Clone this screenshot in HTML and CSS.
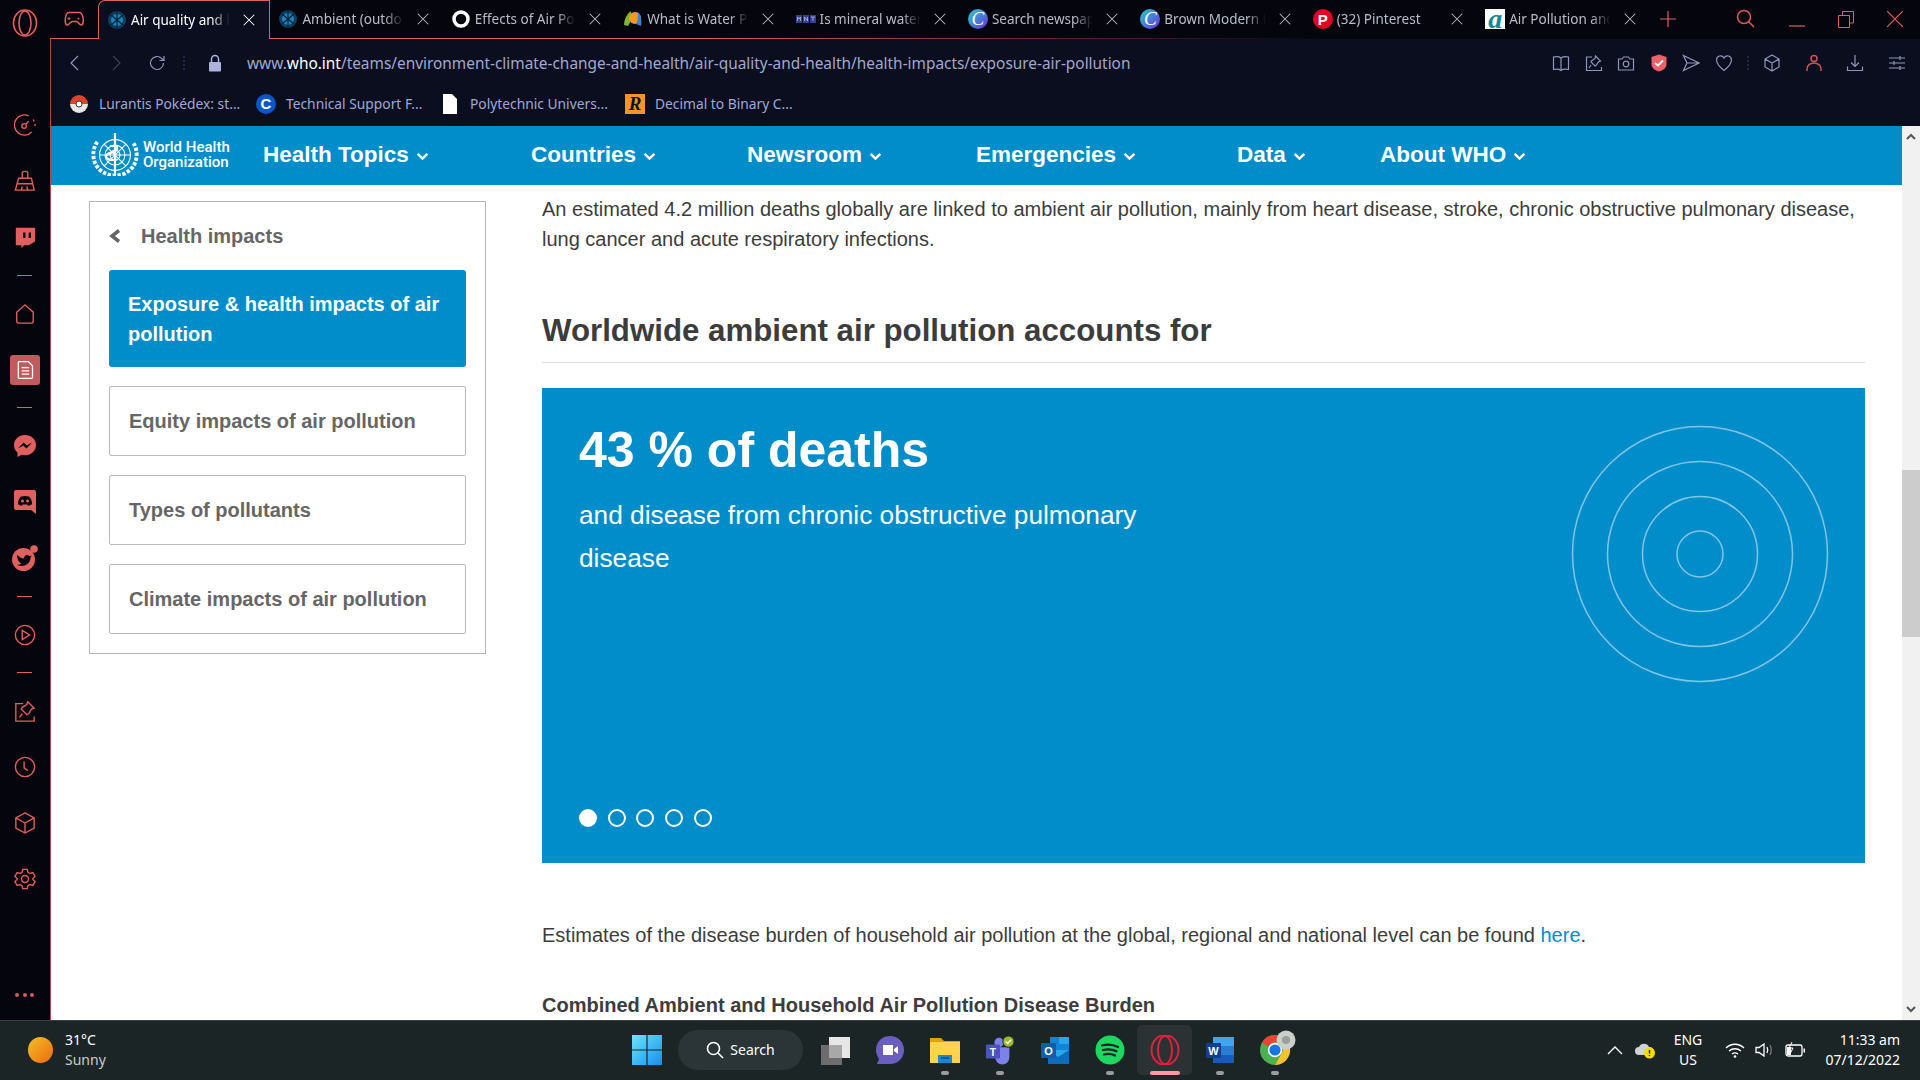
FILE: index.html
```html
<!DOCTYPE html>
<html lang="en">
<head>
    <meta charset="UTF-8">
    <meta name="viewport" content="width=device-width, initial-scale=1.0">
    <title>Air quality and health</title>
    <link rel="stylesheet" href="styles.css">
</head>
<body>
    <svg class="defs" width="0" height="0">
        <symbol id="x" viewBox="0 0 16 16"><path d="M2 2l12 12M14 2L2 14" fill="none" stroke="currentColor" stroke-width="1.2"/></symbol>
        <symbol id="who-fav" viewBox="0 0 20 20"><circle cx="10" cy="10" r="9" fill="#0d3f63"/><circle cx="10" cy="10" r="6" fill="#1a84bd"/><path d="M10 1v18M4 5l12 10M16 5L4 15" stroke="#0b1a2e" stroke-width="1.1"/></symbol>
        <symbol id="canva" viewBox="0 0 20 20"><defs><linearGradient id="cg" x1="0" y1="0" x2="1" y2="1"><stop offset="0" stop-color="#1fd0cf"/><stop offset="1" stop-color="#6d2ee0"/></linearGradient></defs><circle cx="10" cy="10" r="10" fill="url(#cg)"/></symbol>
        <symbol id="chev" viewBox="0 0 12 8"><path d="M1.5 1.5L6 6l4.5-4.5" fill="none" stroke="currentColor" stroke-width="2.2"/></symbol>
    </svg>

    <!-- tab strip -->
    <header class="tabbar">
        <div class="tabbar-logo">
            <svg width="26" height="30" viewBox="0 0 26 30"><ellipse cx="13" cy="15" rx="11.5" ry="13" fill="none" stroke="#e0605f" stroke-width="1.6"/><ellipse cx="13" cy="15" rx="6" ry="12" fill="none" stroke="#e0605f" stroke-width="1.6"/></svg>
        </div>
        <div class="tabrow">
            <div class="tab-game">
                <svg width="20" height="16" viewBox="0 0 20 16"><path d="M5 1.500h10c2.500 0 3.500 2 4 5 .5 3.500.3 7-1.500 7.500-2 .5-3-3-5-3.500H8c-2 .5-3 4-5 3.500C1.200 13.500 1 10 1.500 6.500c.5-3 1.500-5 3.500-5z" fill="none" stroke="#e0605f" stroke-width="1.500"/><path d="M5 6v3M3.500 7.500h3" stroke="#e0605f"/><circle cx="14.500" cy="7.500" r="1" fill="#e0605f"/></svg>
            </div>
            <div class="tab tab-active">
                <svg class="fav"><use href="#who-fav"/></svg>
                <span class="tab-title">Air quality and health</span>
                <svg class="tab-x"><use href="#x"/></svg>
            </div>
            <div class="tab">
                <svg class="fav"><use href="#who-fav"/></svg>
                <span class="tab-title">Ambient (outdoor)</span>
                <svg class="tab-x"><use href="#x"/></svg>
            </div>
            <div class="tab">
                <svg class="fav" viewBox="0 0 20 20"><circle cx="10" cy="10" r="7" fill="none" stroke="#fff" stroke-width="3.500"/></svg>
                <span class="tab-title">Effects of Air Pollution</span>
                <svg class="tab-x"><use href="#x"/></svg>
            </div>
            <div class="tab">
                <svg class="fav" viewBox="0 0 20 20"><path d="M1 16C1 9 5 4 8 2c1 6 0 11-3 15z" fill="#7ab43a"/><circle cx="12" cy="9" r="6" fill="#f29a1f"/><path d="M15 3c3 3 4 9 3 14l-5-2c2-3 2-8 2-12z" fill="#3d7fd1"/></svg>
                <span class="tab-title">What is Water Pollution</span>
                <svg class="tab-x"><use href="#x"/></svg>
            </div>
            <div class="tab">
                <svg class="fav" viewBox="0 0 20 20"><path d="M0 6h6v8H0zM7 6h6v8H7zM14 6h6v8h-6z" fill="#34418f"/><path d="M1.500 12V8l1.500 2 1.500-2v4M8.500 12V8l3 4V8M15 8h4M17 8v4" fill="none" stroke="#b4bce0" stroke-width=".8"/></svg>
                <span class="tab-title">Is mineral water good</span>
                <svg class="tab-x"><use href="#x"/></svg>
            </div>
            <div class="tab">
                <span class="fav fav-letter"><svg class="fav-bg"><use href="#canva"/></svg><i>C</i></span>
                <span class="tab-title">Search newspapers</span>
                <svg class="tab-x"><use href="#x"/></svg>
            </div>
            <div class="tab">
                <span class="fav fav-letter"><svg class="fav-bg"><use href="#canva"/></svg><i>C</i></span>
                <span class="tab-title">Brown Modern Flyer</span>
                <svg class="tab-x"><use href="#x"/></svg>
            </div>
            <div class="tab">
                <span class="fav fav-pin">P</span>
                <span class="tab-title">(32) Pinterest</span>
                <svg class="tab-x"><use href="#x"/></svg>
            </div>
            <div class="tab">
                <span class="fav fav-a">a</span>
                <span class="tab-title">Air Pollution and Health</span>
                <svg class="tab-x"><use href="#x"/></svg>
            </div>
            <svg class="tab-plus" width="16" height="16" viewBox="0 0 16 16"><path d="M8 0v16M0 8h16" stroke="#e0605f" stroke-width="1.200"/></svg>
            <div class="winctl">
                <svg width="20" height="20" viewBox="0 0 20 20"><circle cx="8" cy="8" r="6.500" fill="none" stroke="#d9595a" stroke-width="1.500"/><path d="M12.500 12.500L18 18" stroke="#d9595a" stroke-width="1.500"/></svg>
                <svg width="16" height="16" viewBox="0 0 16 16"><path d="M0 15h16" stroke="#e0605f" stroke-width="1.200"/></svg>
                <svg width="16" height="18" viewBox="0 0 16 18"><path d="M.5 5.500h11v12H.5zM4.500 5V1.500h11V13H12" fill="none" stroke="#e0605f"/></svg>
                <svg width="16" height="16" viewBox="0 0 16 16"><path d="M0 0l16 16M16 0L0 16" stroke="#e0605f" stroke-width="1.200"/></svg>
            </div>
        </div>
    </header>

    <div class="window">
        <!-- opera sidebar -->
        <nav class="rail">
            <div class="rail-ico"><svg viewBox="0 0 24 24"><path d="M19.500 19.500A11 11 0 1 1 16 2" /><path d="M21 6l1 2M23 11v2"/><circle cx="11" cy="13" r="2.500"/><path d="M13 11l3-3"/></svg></div>
            <div class="rail-ico"><svg viewBox="0 0 24 24"><path d="M9 9V3c0-2 6-2 6 0v6M5 9h14l3 13H1.500zM3 15h18M8 22l1-4M15 22l-1-4"/></svg></div>
            <div class="rail-ico"><svg viewBox="0 0 24 24"><path class="fill" fill-rule="evenodd" d="M2 2h21v15l-7 4h-5l-3 3v-3H2zM10 7v6h2.500V7zM16 7v6h2.500V7z"/></svg></div>
            <div class="rail-sep"></div>
            <div class="rail-ico"><svg viewBox="0 0 24 24"><path d="M3 10l9-8 9 8v10a2 2 0 0 1-2 2H5a2 2 0 0 1-2-2z"/></svg></div>
            <div class="rail-ico rail-on"><svg viewBox="0 0 24 24"><path d="M4 3a1 1 0 0 1 1-1h11l5 5v14a1 1 0 0 1-1 1H5a1 1 0 0 1-1-1zM8 9h9M8 13h9M8 17h9"/></svg></div>
            <div class="rail-sep"></div>
            <div class="rail-ico rail-big"><svg viewBox="0 0 24 24"><path class="fill" d="M12 1C5.500 1 1 5.500 1 11c0 3 1.200 5.700 3.500 7.500V23l4-2.200c1 .3 2.300.4 3.500.4 6.500 0 11-4.700 11-10.200S18.500 1 12 1z"/><path class="cut" d="M5 14.500l5.500-6 3.300 3 5.200-3-5.500 6-3.300-3z"/></svg></div>
            <div class="rail-ico rail-big"><svg viewBox="0 0 24 24"><path class="fill" d="M3 0h18a2 2 0 0 1 2 2v22l-5-4H3a2 2 0 0 1-2-2V2a2 2 0 0 1 2-2z"/><path class="cut" d="M5 14c0-3 1-6 3-7.500 2.500-.8 5.500-.8 8 0 2 1.500 3 4.500 3 7.500-1 1-2.500 1.700-4 1.800l-.8-1.300H9.800L9 15.800C7.500 15.700 6 15 5 14z"/><circle class="fill" cx="9.500" cy="11" r="1.500"/><circle class="fill" cx="14.500" cy="11" r="1.500"/></svg></div>
            <div class="rail-ico rail-tw"><svg viewBox="0 0 26 26"><circle class="fill" cx="11.500" cy="14.500" r="11.500"/><path class="cut" d="M5 10c2 2 4.500 3.300 7 3.500 0-3.500 3.500-4.500 5.500-2.300l2.200-.7-1.200 2c0 5.500-4.500 8.500-9 8.500-2 0-3.500-.5-4.500-1.200 2 0 3.500-.5 4.500-1.500-2.500-.5-4.500-4.500-4.500-8.300z"/><circle class="fill" cx="22" cy="4" r="3.800"/></svg></div>
            <div class="rail-sep"></div>
            <div class="rail-ico"><svg viewBox="0 0 24 24"><circle cx="12" cy="12" r="10.500"/><path d="M9 7l8 5-8 5z"/></svg></div>
            <div class="rail-sep"></div>
            <div class="rail-ico"><svg viewBox="0 0 24 24"><path d="M10 4H2v19h20v-5M9 15l-3 4M15 2l7 7-3 1-3 5-2 1-6-6 1-2 5-3z"/></svg></div>
            <div class="rail-ico"><svg viewBox="0 0 24 24"><circle cx="12" cy="12" r="10.500"/><path d="M11 6v7l4 3"/></svg></div>
            <div class="rail-ico"><svg viewBox="0 0 24 24"><path d="M12 1l10 5.500v11L12 23 2 17.500v-11zM2 6.500l10 5.500 10-5.500M12 12v11"/></svg></div>
            <div class="rail-ico"><svg viewBox="0 0 24 24"><path d="M9.500 1.500h5l.7 3.200 2.300 1.300 3.100-1 2.400 4.200-2.400 2.300v1l2.400 2.300-2.400 4.200-3.100-1-2.300 1.300-.7 3.200h-5l-.7-3.200-2.300-1.300-3.100 1-2.400-4.200L3.400 12.500v-1L1 9.200l2.400-4.200 3.100 1 2.300-1.300z"/><circle cx="12" cy="12" r="3.800"/></svg></div>
            <div class="rail-more"><span></span><span></span><span></span></div>
        </nav>

        <div class="browser">
            <div class="toolbar">
                <svg class="tb" viewBox="0 0 18 18"><path d="M12 2L5 9l7 7"/></svg>
                <svg class="tb tb-dim" viewBox="0 0 18 18"><path d="M6 2l7 7-7 7"/></svg>
                <svg class="tb" viewBox="0 0 18 18"><path d="M15.500 9a6.500 6.500 0 1 1-2-4.700L16 6.500M16 2v4.500h-4.500"/></svg>
                <span class="tb-dots"></span>
                <svg class="tb-lock" width="14" height="18" viewBox="0 0 14 18"><path d="M3.500 8V5a3.500 3.500 0 0 1 7 0v3" fill="none" stroke="#aeb3dc" stroke-width="1.500"/><rect x="1" y="8" width="12" height="9.500" rx="1" fill="#aeb3dc"/></svg>
                <div class="url">www.<b>who.int</b>/teams/environment-climate-change-and-health/air-quality-and-health/health-impacts/exposure-air-pollution</div>
                <div class="tb-right">
                    <svg class="tb" viewBox="0 0 18 18"><path d="M9 4c-2-1.500-5-1.500-7.500-1v12.500c2.500-.5 5.500-.5 7.500 1 2-1.500 5-1.500 7.500-1V3C14 2.500 11 2.500 9 4zM9 4v12.500"/></svg>
                    <svg class="tb" viewBox="0 0 18 18"><path d="M7 3H1.500v13.500h15V13M6 11l-2 3M10.500 2l5 5-2 1-2.500 3.500-1 .5-4-4 .5-1 3.500-2.500z"/></svg>
                    <svg class="tb" viewBox="0 0 18 18"><path d="M1.500 5h3.500l1.500-2h5L13 5h3.500v11h-15z"/><circle cx="9" cy="10" r="2.800"/></svg>
                    <svg class="tb" viewBox="0 0 18 18"><path class="tb-red" d="M9 .5l7.500 2.500v7c0 4-3.500 6.500-7.500 7.500C5 16.500 1.500 14 1.500 10V3z"/><path d="M5 9l3 2.500L13 6.500" stroke="#fff" stroke-width="1.800"/></svg>
                    <svg class="tb" viewBox="0 0 18 18"><path d="M1.500 1.500L17 9 1.500 16.500 5 9zM5 9h12"/></svg>
                    <svg class="tb" viewBox="0 0 18 18"><path d="M9 16.500C4 12.500 1.500 9.500 1.500 6c0-4.500 5.500-5.500 7.500-2 2-3.500 7.500-2.500 7.500 2 0 3.500-2.500 6.500-7.500 10.500z"/></svg>
                    <span class="tb-dots tb-dots-r"></span>
                    <svg class="tb" viewBox="0 0 18 18"><path d="M9 1l7 4v8l-7 4-7-4V5zM2 5l7 4 7-4M9 9v8"/></svg>
                    <svg class="tb tb-wide tb-user" viewBox="0 0 18 18"><circle cx="9" cy="4.500" r="3"/><path d="M2 17v-2c0-3.500 3-6 7-6s7 2.500 7 6v2"/></svg>
                    <svg class="tb tb-wide" viewBox="0 0 18 18"><path d="M9 1v11M5 8.500l4 4 4-4M1.500 12.500v4h15v-4"/></svg>
                    <svg class="tb tb-wide" viewBox="0 0 18 18"><path d="M1 4h16M1 9h16M1 14h16M12 2v4M6 7v4M12 12v4"/></svg>
                </div>
            </div>
            <div class="bookmarks">
                <div class="bm bm-1">
                    <svg class="bm-ico" viewBox="0 0 20 20"><path d="M1 10a9 9 0 0 1 18 0z" fill="#d8452a"/><path d="M1 10a9 9 0 0 0 18 0z" fill="#e8e6e0"/><circle cx="10" cy="10" r="3" fill="#fff" stroke="#333"/></svg>
                    <span>Lurantis Pokédex: st...</span>
                </div>
                <div class="bm bm-2">
                    <span class="bm-ico bm-c">C</span>
                    <span>Technical Support F...</span>
                </div>
                <div class="bm bm-3">
                    <svg class="bm-ico" viewBox="0 0 20 20"><path d="M3 0h9l5 5v15H3z" fill="#fff"/></svg>
                    <span>Polytechnic Univers...</span>
                </div>
                <div class="bm">
                    <span class="bm-ico bm-r">R</span>
                    <span>Decimal to Binary C...</span>
                </div>
            </div>

            <div class="viewport">
                <div class="pagecol">
                    <div class="sitenav">
                        <div class="logo">
                            <svg class="logo-mark" viewBox="3 0 42 39">
                                <g fill="none" stroke="#fff">
                                    <circle cx="24" cy="20" r="14"/>
                                    <circle cx="24" cy="20" r="9"/>
                                    <circle cx="24" cy="20" r="4.500"/>
                                    <path d="M10 20h28M24 6v28M14 10l20 20M34 10L14 30"/>
                                    <path d="M24 0v38" stroke-width="2"/>
                                    <path d="M20 12c8-2 8 4 0 6s-4 8 6 6" stroke-width="2"/>
                                    <path d="M8 8C2 16 3 30 14 36c5 3 14 4 20 0 11-6 12-20 6-28" stroke-width="3.500" stroke-dasharray="3 1.500"/>
                                </g>
                            </svg>
                            <div class="logo-text"><span>World Health</span><span>Organization</span></div>
                        </div>
                        <div class="menu">
                            <a>Health Topics<svg class="chev"><use href="#chev"/></svg></a>
                            <a>Countries<svg class="chev"><use href="#chev"/></svg></a>
                            <a>Newsroom<svg class="chev"><use href="#chev"/></svg></a>
                            <a>Emergencies<svg class="chev"><use href="#chev"/></svg></a>
                            <a>Data<svg class="chev"><use href="#chev"/></svg></a>
                            <a>About WHO<svg class="chev"><use href="#chev"/></svg></a>
                        </div>
                    </div>

                    <div class="page">
                        <aside class="sidebox">
                            <div class="side-back">
                                <svg width="12" height="14" viewBox="0 0 12 14"><path d="M10 1.500L3 7l7 5.500" fill="none" stroke="#666" stroke-width="3.500"/></svg>
                                <span>Health impacts</span>
                            </div>
                            <a class="side-link side-active">Exposure &amp; health impacts of air pollution</a>
                            <a class="side-link">Equity impacts of air pollution</a>
                            <a class="side-link">Types of pollutants</a>
                            <a class="side-link">Climate impacts of air pollution</a>
                        </aside>

                        <main class="content">
                            <p class="body-text">An estimated 4.2 million deaths globally are linked to ambient air pollution, mainly from heart disease, stroke, chronic obstructive pulmonary disease, lung cancer and acute respiratory infections.</p>
                            <h2>Worldwide ambient air pollution accounts for</h2>
                            <section class="stat">
                                <div class="stat-text">
                                    <h3>43 % of deaths</h3>
                                    <p>and disease from chronic obstructive pulmonary disease</p>
                                    <div class="dots"><span class="dot dot-on"></span><span class="dot"></span><span class="dot"></span><span class="dot"></span><span class="dot"></span></div>
                                </div>
                                <svg class="rings" width="260" height="260" viewBox="0 0 260 260">
                                    <circle cx="130" cy="130" r="127.500"/>
                                    <circle cx="130" cy="130" r="92.500"/>
                                    <circle cx="130" cy="130" r="57.500"/>
                                    <circle cx="130" cy="130" r="23"/>
                                </svg>
                            </section>
                            <p class="body-text est">Estimates of the disease burden of household air pollution at the global, regional and national level can be found <a>here</a>.</p>
                            <p class="body-text combined">Combined Ambient and Household Air Pollution Disease Burden</p>
                        </main>
                    </div>
                </div>
                <div class="scrollbar">
                    <svg class="sb-up" width="10" height="7" viewBox="0 0 10 7"><path d="M1 6l4-4 4 4" fill="none" stroke="#555" stroke-width="2"/></svg>
                    <div class="sb-thumb"></div>
                    <svg class="sb-down" width="10" height="7" viewBox="0 0 10 7"><path d="M1 1l4 4 4-4" fill="none" stroke="#555" stroke-width="2"/></svg>
                </div>
            </div>
        </div>
    </div>

    <!-- windows taskbar -->
    <footer class="taskbar">
        <div class="weather">
            <span class="sun"></span>
            <div class="weather-text"><span>31°C</span><span class="sunny">Sunny</span></div>
        </div>
        <svg class="start" width="30" height="30" viewBox="0 0 30 30">
            <defs><linearGradient id="win" x1="0" y1="0" x2="1" y2="1"><stop offset="0" stop-color="#6fe3fb"/><stop offset="1" stop-color="#1490ee"/></linearGradient></defs>
            <path d="M0 0h14.400v14.400H0zM15.600 0H30v14.400H15.600zM0 15.600h14.400V30H0zM15.600 15.600H30V30H15.600z" fill="url(#win)"/>
        </svg>
        <div class="searchpill">
            <svg width="18" height="18" viewBox="0 0 18 18"><circle cx="7.500" cy="7.500" r="6" fill="none" stroke="#fff" stroke-width="1.600"/><path d="M12 12l5 5" stroke="#fff" stroke-width="1.600"/></svg>
            <span>Search</span>
        </div>
        <div class="apps">
            <div class="app"><svg viewBox="0 0 30 30"><rect x="9" y="2" width="21" height="21" fill="#e6e6e6"/><rect x="1" y="10" width="21" height="21" fill="#6d6d6d"/><rect x="9" y="10" width="13" height="13" fill="#a8a8a8"/></svg></div>
            <div class="app"><svg viewBox="0 0 30 30"><path d="M15 1c8 0 14 6 14 14s-6 14-14 14H2l2-5C2 21 1 18 1 15 1 7 7 1 15 1z" fill="#6a5fc1"/><path d="M8 10h10v10H8zM19 14l4-3v8l-4-3z" fill="#fff"/></svg></div>
            <div class="app app-open"><svg viewBox="0 0 30 30"><path d="M0 3h11l3 3h16v4H0z" fill="#e5a00d"/><path d="M0 7h30v21H0z" fill="#ffd34e"/><path d="M8 20h14v8H8z" fill="#1c86d1"/><path d="M11 23h8" stroke="#0c4d85" stroke-width="1.500"/></svg></div>
            <div class="app app-open"><svg viewBox="0 0 32 30"><circle cx="15" cy="7" r="5" fill="#7b83eb"/><path d="M11 12h15v11a7 7 0 0 1-15 0z" fill="#7b83eb"/><rect x="1" y="9" width="15" height="15" rx="1" fill="#4b53bc"/><text x="8.500" y="21" class="app-t">T</text><circle cx="25" cy="6" r="6" fill="#9bbb2e" stroke="#1c2526"/><path d="M22 6l2 2 4-4" fill="none" stroke="#fff" stroke-width="1.500"/></svg></div>
            <div class="app"><svg viewBox="0 0 30 30"><path d="M10 2h19v14H10z" fill="#1284d8"/><path d="M19 2h10v7H19z" fill="#28a8ea"/><path d="M8 15h21v14H8z" fill="#0f6cbd"/><path d="M8 15l10 7 11-7" fill="#28a8ea"/><rect x="1" y="8" width="15" height="15" rx="1" fill="#0f5fa8"/><text x="8.500" y="20" class="app-t">O</text></svg></div>
            <div class="app app-open"><svg viewBox="0 0 30 30"><circle cx="15" cy="15" r="14.500" fill="#1ed760"/><path d="M7 10.500c6-1.700 11-1.200 16 1.500M8 15c5-1.300 9.500-.8 13.500 1.300M9 19.500c4-1 7.500-.7 11 1" fill="none" stroke="#16222a" stroke-width="2.200" stroke-linecap="round"/></svg></div>
            <div class="app app-active"><svg viewBox="0 0 30 30"><ellipse cx="15" cy="15" rx="13.500" ry="15" fill="none" stroke="#e0203f" stroke-width="2"/><ellipse cx="15" cy="15" rx="7" ry="14" fill="none" stroke="#e0203f" stroke-width="2"/></svg></div>
            <div class="app app-open"><svg viewBox="0 0 30 30"><path d="M8 2h21v26H8z" fill="#185abd"/><path d="M8 2h21v9H8z" fill="#41a5ee"/><path d="M8 11h21v9H8z" fill="#2b7cd3"/><rect x="1" y="8" width="15" height="15" rx="1" fill="#103f91"/><text x="8.500" y="20" class="app-t">W</text></svg></div>
            <div class="app app-open"><svg class="app-over" viewBox="0 0 30 30"><circle cx="15" cy="15" r="15" fill="#4caf50"/><path d="M15 0a15 15 0 0 1 13 7.500H15a7.500 7.500 0 0 0-6.800 4.300L2 7.500A15 15 0 0 1 15 0z" fill="#ea4335"/><path d="M28 7.500A15 15 0 0 1 15 30l6.500-11.200A7.500 7.500 0 0 0 22 11z" fill="#fbc02d"/><circle cx="15" cy="15" r="7.200" fill="#fff"/><circle cx="15" cy="15" r="5.600" fill="#1a73e8"/><circle cx="26" cy="5" r="9.500" fill="#c9d0c9"/><circle cx="26" cy="5" r="4" fill="#98a098"/></svg></div>
        </div>
        <div class="tray">
            <div class="tray-ico"><svg width="16" height="10" viewBox="0 0 16 10"><path d="M1 9l7-7 7 7" fill="none" stroke="#fff" stroke-width="1.300"/></svg></div>
            <div class="tray-ico"><svg width="22" height="20" viewBox="0 0 22 20"><path d="M5 15a4 4 0 0 1 0-8 5.500 5.500 0 0 1 10 0 4 4 0 0 1 1 8z" fill="#cfd3d4"/><circle cx="15.500" cy="13" r="5.500" fill="#f5dc00"/><path d="M15.500 10v3.500M15.500 15v1" stroke="#222" stroke-width="1.400"/></svg></div>
            <div class="tray-lang"><span>ENG</span><span>US</span></div>
            <div class="tray-ico tray-wifi"><svg width="20" height="16" viewBox="0 0 20 16"><path d="M1 6c5-5 13-5 18 0M4 9c3.500-3 8.500-3 12 0M7 12c2-1.500 4-1.500 6 0" fill="none" stroke="#fff" stroke-width="1.400"/><circle cx="10" cy="14.500" r="1.300" fill="#fff"/></svg></div>
            <div class="tray-ico"><svg width="20" height="16" viewBox="0 0 20 16"><path d="M1 5.500h3L9 2v12l-5-3.500H1z" fill="none" stroke="#fff" stroke-width="1.300"/><path d="M12 5c1 2 1 4 0 6" fill="none" stroke="#fff" stroke-width="1.300"/><path d="M15 3c1.500 3 1.500 7 0 10" fill="none" stroke="#777" stroke-width="1.300"/></svg></div>
            <div class="tray-ico"><svg width="21" height="16" viewBox="0 0 21 16"><rect x="1" y="3" width="16" height="11" rx="2" fill="none" stroke="#fff" stroke-width="1.300"/><path d="M18.500 6.500h1.500v4h-1.500z" fill="#fff"/><path d="M2 13V5h4v8z" fill="#fff"/><path d="M7 0L4 6h4l-3 6" fill="none" stroke="#fff"/></svg></div>
            <div class="clock"><span>11:33 am</span><span>07/12/2022</span></div>
        </div>
    </footer>
</body>
</html>
```

FILE: styles.css
```css
* {
    box-sizing: border-box;
}
html, body {
    margin: 0;
    height: 100%;
}
body {
    display: flex;
    flex-direction: column;
    width: 1920px;
    height: 1080px;
    overflow: hidden;
    background-color: #05060d;
    font-family: "Liberation Sans", Arial, sans-serif;
}
.defs {
    position: absolute;
}

/* tab strip */
.tabbar {
    display: flex;
    height: 39px;
    flex: none;
}
.tabbar-logo {
    width: 50px;
    display: flex;
    justify-content: center;
    align-items: center;
    padding-top: 8px;
    padding-bottom: 2px;
}
.tabrow {
    flex: 1;
    display: flex;
    align-items: center;
    border-bottom: 1px solid;
    border-image: linear-gradient(90deg, #e0605f 0, #e0605f 34%, #6b2a30 52%, #05060d 68%) 1;
}
.tab-game {
    width: 48px;
    display: flex;
    justify-content: center;
}
.tab {
    width: 172.4px;
    height: 38px;
    display: flex;
    align-items: center;
    padding-left: 8px;
    padding-right: 13px;
    color: #b9bcc7;
    font-family: "Noto Sans", sans-serif;
    font-size: 13.500px;
}
.tab-active {
    height: 39px;
    margin-bottom: -1px;
    background-color: #0b0e1f;
    border: 1px solid #e0605f;
    border-bottom: none;
    border-top-left-radius: 7px;
    color: #fff;
}
.fav {
    width: 20px;
    height: 20px;
    flex: none;
    margin-right: 4px;
}
.fav-letter {
    position: relative;
    display: flex;
    justify-content: center;
    align-items: center;
}
.fav-bg {
    position: absolute;
    width: 20px;
    height: 20px;
}
.fav-letter i {
    position: relative;
    font-family: "Liberation Serif", serif;
    font-size: 19px;
    color: #fff;
}
.fav-pin {
    display: flex;
    justify-content: center;
    align-items: center;
    border-radius: 50%;
    background-color: #e60023;
    color: #fff;
    font-family: "Liberation Sans", sans-serif;
    font-weight: bold;
    font-size: 15px;
}
.fav-a {
    display: flex;
    justify-content: center;
    align-items: center;
    background-color: #fff;
    color: #0d8a94;
    font-family: "Liberation Serif", serif;
    font-style: italic;
    font-weight: bold;
    font-size: 28px;
    line-height: 20px;
    overflow: hidden;
}
.tab-title {
    flex: 1;
    min-width: 0;
    white-space: nowrap;
    overflow: hidden;
    mask-image: linear-gradient(90deg, #000 78%, transparent 96%);
}
.tab-x {
    width: 14px;
    height: 14px;
    flex: none;
    margin-left: 8px;
    color: #b9bcc7;
}
.tab-active .tab-x {
    color: #fff;
}
.tab-plus {
    margin-left: 10px;
}
.winctl {
    margin-left: auto;
    display: flex;
    align-items: center;
    gap: 33px;
    padding-right: 17px;
}

.window {
    flex: 1;
    display: flex;
    min-height: 0;
}

/* left rail */
.rail {
    width: 51px;
    flex: none;
    display: flex;
    flex-direction: column;
    align-items: center;
    padding-top: 58px;
    padding-right: 1px;
    border-right: 1px solid #b0484b;
}
.rail-ico {
    height: 56.200px;
    width: 100%;
    display: flex;
    justify-content: center;
    align-items: center;
    flex: none;
}
.rail-ico svg {
    width: 22px;
    height: 22px;
    fill: none;
    stroke: #e0605f;
    stroke-width: 1.500;
}
.rail-ico .fill {
    fill: #e0605f;
    stroke: none;
}
.rail-ico .cut {
    fill: #05060d;
    stroke: none;
}
.rail-on svg {
    width: 30px;
    height: 30px;
    padding: 5px;
    border-radius: 3px;
    background-color: #c25a5e;
    stroke: #fff;
}
.rail-big svg {
    width: 24px;
    height: 24px;
}
.rail-tw svg {
    width: 26px;
    height: 26px;
}
.rail-sep {
    height: 20px;
    flex: none;
    display: flex;
    align-items: center;
    width: 15px;
}
.rail-sep::before {
    content: "";
    width: 100%;
    height: 1px;
    background-color: #e0605f;
}
.rail-more {
    margin-top: auto;
    margin-bottom: 23px;
    display: flex;
    gap: 3.500px;
}
.rail-more span {
    width: 4px;
    height: 4px;
    border-radius: 50%;
    background-color: #d9595a;
}

.browser {
    flex: 1;
    min-width: 0;
    display: flex;
    flex-direction: column;
    background-color: #0b0e1f;
}

/* address bar */
.toolbar {
    height: 48px;
    flex: none;
    display: flex;
    align-items: center;
    padding-left: 15px;
    padding-right: 14px;
    gap: 23px;
}
.tb {
    width: 18px;
    height: 18px;
    flex: none;
    fill: none;
    stroke: #8f95bb;
    stroke-width: 1.200;
}
.tb-dim {
    stroke: #3a3f5a;
}
.tb-red {
    fill: #f0606a;
    stroke: none;
}
.tb-user {
    stroke: #c9545a;
    stroke-width: 1.500;
}
.tb-dots {
    width: 2px;
    height: 14px;
    margin-left: -6px;
    background-image: linear-gradient(#1f2744 50%, transparent 50%);
    background-size: 2px 4px;
}
.tb-lock {
    flex: none;
}
.url {
    margin-left: 2px;
    font-family: "Noto Sans", sans-serif;
    font-size: 15.400px;
    color: #a3a7cc;
    white-space: nowrap;
}
.url b {
    font-weight: normal;
    color: #fff;
}
.tb-right {
    margin-left: auto;
    display: flex;
    align-items: center;
    gap: 14.600px;
}
.tb-dots-r {
    margin-left: -1px;
}
.tb-wide {
    margin-left: 9px;
}

/* bookmarks */
.bookmarks {
    height: 39px;
    flex: none;
    display: flex;
    align-items: center;
    padding-left: 18px;
    padding-bottom: 6px;
    font-family: "Noto Sans", sans-serif;
    font-size: 13.800px;
    color: #9fa8d6;
}
.bm {
    display: flex;
    align-items: center;
    gap: 10px;
    white-space: nowrap;
}
.bm-1 {
    width: 187px;
}
.bm-2 {
    width: 184px;
}
.bm-3 {
    width: 185px;
}
.bm-ico {
    width: 20px;
    height: 20px;
    flex: none;
}
.bm-c {
    display: flex;
    justify-content: center;
    align-items: center;
    border-radius: 50%;
    background-color: #0a55c8;
    color: #fff;
    font-family: "Liberation Sans", sans-serif;
    font-weight: bold;
    font-size: 15px;
}
.bm-r {
    display: flex;
    justify-content: center;
    align-items: center;
    background-color: #f5922a;
    color: #111;
    font-family: "Liberation Serif", serif;
    font-style: italic;
    font-weight: bold;
    font-size: 19px;
}

/* WHO header */
.viewport {
    flex: 1;
    min-height: 0;
    display: flex;
    background-color: #fff;
}
.pagecol {
    flex: 1;
    min-width: 0;
    display: flex;
    flex-direction: column;
}
.sitenav {
    height: 59px;
    flex: none;
    display: flex;
    align-items: center;
    padding-left: 40px;
    padding-bottom: 2px;
    background-color: #008dc9;
    color: #fff;
}
.logo {
    width: 172px;
    flex: none;
    display: flex;
    align-items: center;
    gap: 4px;
}
.logo-mark {
    width: 48px;
    height: 43px;
}
.logo-text {
    display: flex;
    flex-direction: column;
    font-family: Roboto, sans-serif;
    font-size: 15px;
    font-weight: 500;
}
.logo-text span {
    height: 15px;
    line-height: 15px;
    white-space: nowrap;
}
.menu {
    display: grid;
    grid-template-columns: 268px 216px 229px 261px 143px auto;
    font-size: 22.500px;
    font-weight: bold;
}
.menu a {
    display: flex;
    align-items: center;
    white-space: nowrap;
}
.chev {
    width: 13px;
    height: 9px;
    margin-left: 7px;
    margin-top: 3px;
}

/* page */
.page {
    flex: 1;
    min-height: 0;
    display: flex;
    align-items: flex-start;
    overflow: hidden;
    padding-left: 38px;
    color: #3c3c3c;
}
.sidebox {
    width: 397px;
    flex: none;
    margin-top: 16px;
    padding: 0 19px 19px;
    border: 1px solid #b5b5b5;
}
.side-back {
    height: 68px;
    display: flex;
    align-items: center;
    gap: 20px;
    font-size: 20px;
    font-weight: bold;
    color: #666;
}
.side-link {
    display: flex;
    align-items: center;
    height: 70px;
    margin-top: 19px;
    padding: 0 19px;
    border: 1px solid #bbb;
    border-radius: 2px;
    font-size: 20px;
    font-weight: bold;
    color: #666;
}
.side-active {
    height: 97px;
    margin-top: 0;
    border: none;
    border-radius: 3px;
    background-color: #008dc9;
    color: #fff;
    line-height: 30px;
}
.content {
    width: 1323px;
    flex: none;
    margin-left: 56px;
    padding-top: 9px;
}
.body-text {
    margin: 0;
    font-size: 20px;
    line-height: 30px;
}
.body-text a {
    color: #008dc9;
}
h2 {
    margin: 59px 0 25px;
    padding-bottom: 13px;
    border-bottom: 1px solid #ddd;
    font-size: 31.250px;
    line-height: 36px;
}
.stat {
    height: 475px;
    display: flex;
    padding: 34px 35px 36px 37px;
    background-color: #008dc9;
    color: #fff;
}
.stat-text {
    flex: 1;
    display: flex;
    flex-direction: column;
}
.stat h3 {
    margin: 0;
    font-size: 50px;
    line-height: 56px;
}
.stat p {
    width: 600px;
    margin: 16px 0 0;
    font-size: 26.250px;
    line-height: 43px;
}
.dots {
    margin-top: auto;
    display: flex;
    gap: 10.700px;
}
.dot {
    width: 18px;
    height: 18px;
    border: 2px solid #fff;
    border-radius: 50%;
}
.dot-on {
    background-color: #fff;
}
.rings {
    flex: none;
    margin-top: 2px;
    fill: none;
    stroke: #7fc6e4;
    stroke-width: 1.500;
}
.est {
    margin-top: 57px;
}
.combined {
    margin-top: 40px;
    font-weight: bold;
}

/* scrollbar */
.scrollbar {
    position: relative;
    width: 18px;
    flex: none;
    background-color: #f1f1f1;
}
.sb-thumb {
    position: absolute;
    top: 344px;
    left: 0;
    width: 100%;
    height: 167px;
    background-color: #ccc;
}
.sb-up, .sb-down {
    position: absolute;
    left: 4px;
}
.sb-up {
    top: 7px;
}
.sb-down {
    bottom: 7px;
}

/* taskbar */
.taskbar {
    height: 60px;
    flex: none;
    display: flex;
    align-items: center;
    padding-left: 28px;
    padding-right: 20px;
    padding-bottom: 2px;
    border-top: 1px solid #3b3e40;
    background-color: #1c2526;
    color: #fff;
    font-family: "Noto Sans", sans-serif;
}
.weather {
    width: 604px;
    flex: none;
    display: flex;
    align-items: center;
    gap: 12px;
}
.sun {
    width: 25px;
    height: 26px;
    border-radius: 50%;
    background: linear-gradient(135deg, #f3c02a, #ee6a0c);
}
.weather-text {
    display: flex;
    flex-direction: column;
    font-size: 14px;
    line-height: 20px;
}
.sunny {
    color: #c9cdcd;
}
.start {
    flex: none;
}
.searchpill {
    width: 125px;
    height: 40px;
    margin-left: 16px;
    display: flex;
    align-items: center;
    justify-content: center;
    gap: 6px;
    border-radius: 20px;
    background-color: #2b3436;
    font-size: 14px;
}
.apps {
    margin-left: 4px;
    display: flex;
}
.app {
    position: relative;
    width: 55px;
    height: 50px;
    display: flex;
    justify-content: center;
    align-items: center;
}
.app svg {
    width: 30px;
    height: 30px;
}
.app .app-over {
    overflow: visible;
}
.app-t {
    font-family: "Liberation Sans", sans-serif;
    font-size: 11px;
    font-weight: bold;
    fill: #fff;
    text-anchor: middle;
}
.app-open::after, .app-active::after {
    content: "";
    position: absolute;
    bottom: 0;
    left: 50%;
    width: 8px;
    height: 4px;
    margin-left: -4px;
    border-radius: 2px;
    background-color: #9a9d9e;
}
.app-active {
    background-color: #2a3234;
    border-radius: 5px;
}
.app-active::after {
    width: 30px;
    margin-left: -15px;
    background-color: #ff9aa5;
}
.tray {
    margin-left: auto;
    display: flex;
    align-items: center;
    font-size: 14px;
}
.tray-ico {
    width: 30px;
    display: flex;
    justify-content: center;
}
.tray-wifi {
    margin-left: 4px;
}
.tray-lang {
    width: 56px;
    display: flex;
    flex-direction: column;
    align-items: center;
    line-height: 20px;
}
.clock {
    width: 90px;
    display: flex;
    flex-direction: column;
    align-items: flex-end;
    line-height: 20px;
    white-space: nowrap;
}
```
